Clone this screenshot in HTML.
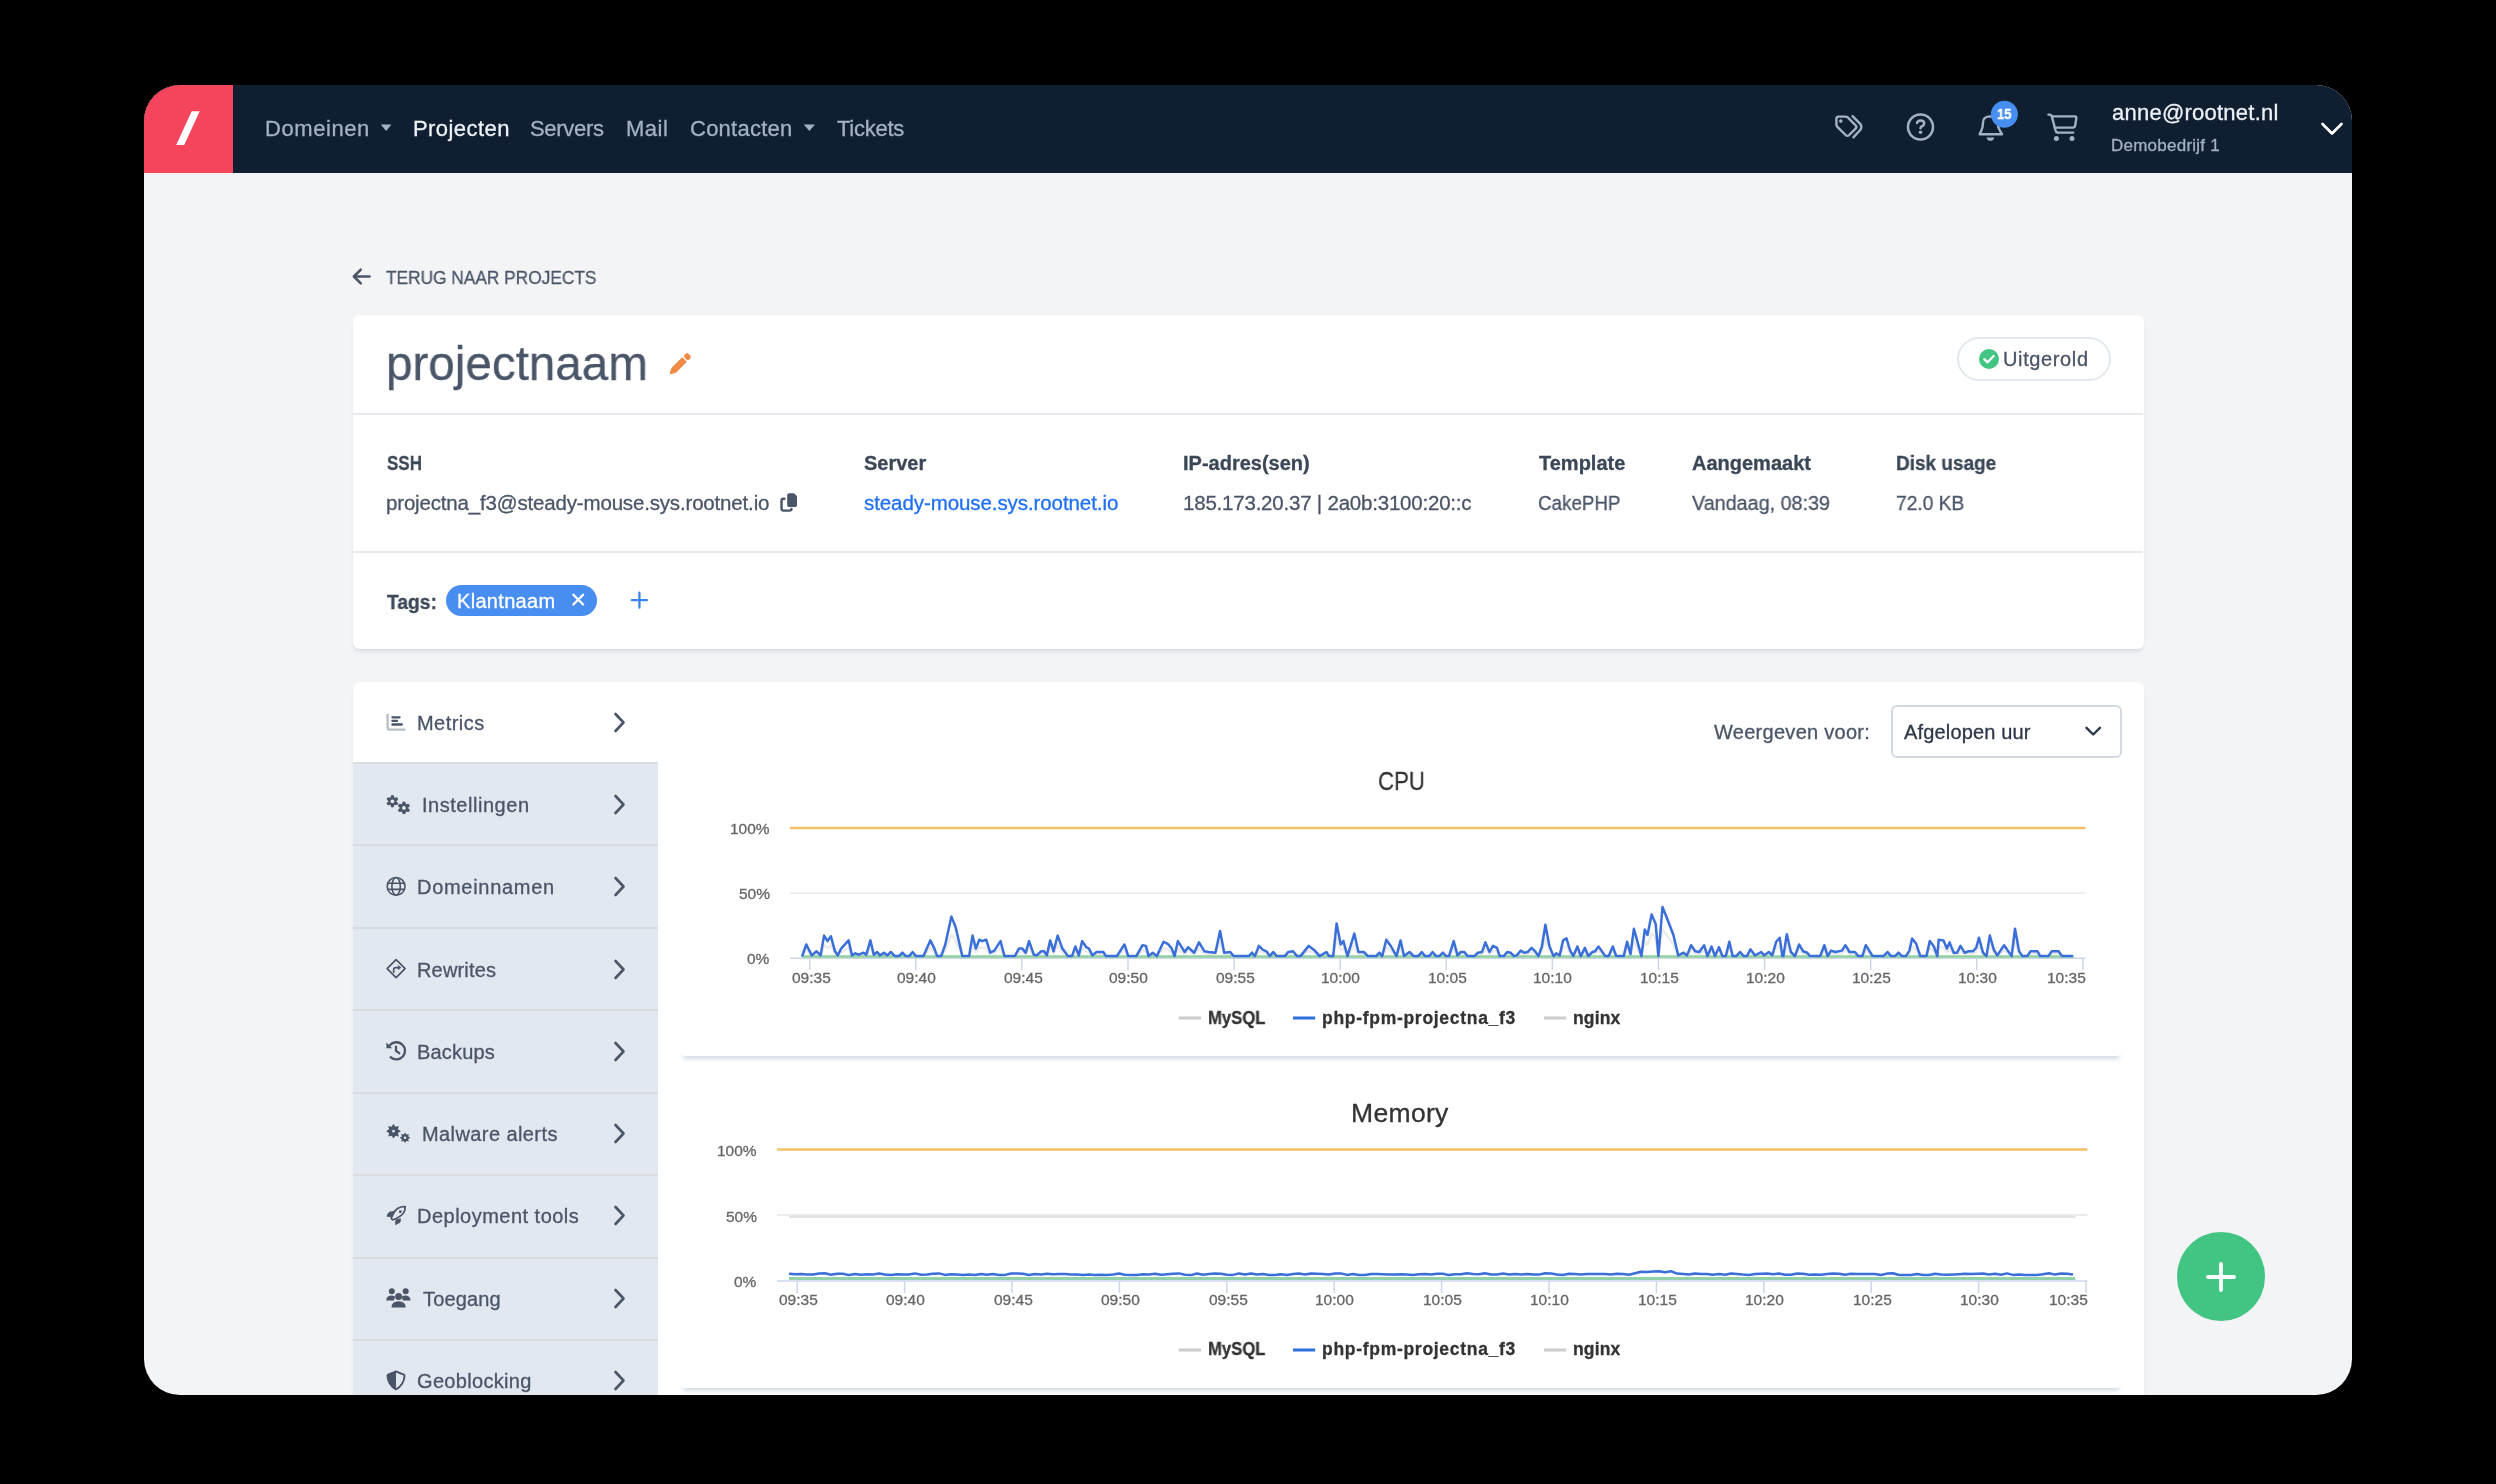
<!DOCTYPE html>
<html><head><meta charset="utf-8"><style>
html,body{margin:0;padding:0;}
body{width:2496px;height:1484px;background:#000;position:relative;overflow:hidden;font-family:"Liberation Sans",sans-serif;}
.t{position:absolute;white-space:pre;will-change:transform;-webkit-text-stroke:0.3px currentColor;}
#win{position:absolute;left:0;top:0;width:2496px;height:1484px;background:#f3f4f6;clip-path:inset(85px 144px 89px 144px round 36px);}
</style></head><body><div id="win">
<div style="position:absolute;left:144px;top:85px;width:2208px;height:87.5px;background:#0f1e30"></div>
<div style="position:absolute;left:144px;top:85px;width:88.5px;height:87.5px;background:#f5455c"></div>
<svg style="position:absolute;left:170px;top:105px" width="36" height="46" viewBox="0 0 36 46"><polygon points="21.7,6.3 29.7,6.3 14.2,40 6.2,40" fill="#fff"/></svg>
<div class="t" style="left:265.20px;top:118.07px;font-size:22px;line-height:22px;color:#a3b1c4;font-weight:400;letter-spacing:0.580px;">Domeinen</div>
<svg style="position:absolute;left:380px;top:124px" width="12" height="7" viewBox="0 0 12 7"><polygon points="0.8,0.5 11.5,0.5 6.15,6.9" fill="#a3b1c4"/></svg>
<div class="t" style="left:413.00px;top:118.07px;font-size:22px;line-height:22px;color:#eef2f7;font-weight:400;letter-spacing:0.437px;">Projecten</div>
<div class="t" style="left:530.10px;top:118.07px;font-size:22px;line-height:22px;color:#a3b1c4;font-weight:400;letter-spacing:-0.316px;">Servers</div>
<div class="t" style="left:626.40px;top:118.07px;font-size:22px;line-height:22px;color:#a3b1c4;font-weight:400;letter-spacing:0.517px;">Mail</div>
<div class="t" style="left:690.00px;top:118.07px;font-size:22px;line-height:22px;color:#a3b1c4;font-weight:400;letter-spacing:0.243px;">Contacten</div>
<svg style="position:absolute;left:803px;top:124px" width="13" height="7" viewBox="0 0 13 7"><polygon points="0.7,0.5 12,0.5 6.35,6.9" fill="#a3b1c4"/></svg>
<div class="t" style="left:837.40px;top:118.07px;font-size:22px;line-height:22px;color:#a3b1c4;font-weight:400;letter-spacing:-0.260px;">Tickets</div>
<svg style="position:absolute;left:0;top:0" width="2496" height="1484" viewBox="0 0 2496 1484"><g fill="none" stroke="#a3b1c4" stroke-width="2.4" stroke-linejoin="round" stroke-linecap="round"><path d="M1838.3,116.6 L1845.6,116.6 Q1847,116.6 1848,117.6 L1855.6,125.3 Q1857.2,127 1855.6,128.6 L1849.2,135 Q1847.4,136.8 1845.6,135 L1837.6,127.1 Q1836.4,125.9 1836.4,124.5 L1836.4,118.5 Q1836.4,116.6 1838.3,116.6 Z"/><path d="M1852.6,116.1 L1860.2,123.8 Q1862.4,126.6 1860.4,129.8 L1853.4,137.4"/></g><circle cx="1840.8" cy="121.1" r="1.8" fill="#a3b1c4"/><circle cx="1920.5" cy="127" r="12.5" fill="none" stroke="#a3b1c4" stroke-width="2.5"/><path d="M1917,123 Q1917.6,120.4 1920.6,120.4 Q1924.2,120.4 1924.2,123.4 Q1924.2,125.2 1921.8,126.3 Q1920.5,127 1920.5,128.2" fill="none" stroke="#a3b1c4" stroke-width="2.5" stroke-linecap="round"/><circle cx="1920.5" cy="132.3" r="1.75" fill="#a3b1c4"/><path d="M1979.6,134.2 L2002,134.2 L1999.6,130 Q1997.6,127 1997.6,122 Q1997.6,116.6 1990.4,116.4 Q1983,116.6 1983,122.4 Q1983,127 1981.4,130.6 Z" fill="none" stroke="#a3b1c4" stroke-width="2.4" stroke-linejoin="round"/><path d="M1986.6,137.4 L1994.2,137.4 Q1993.6,140.8 1990.4,140.8 Q1987.2,140.8 1986.6,137.4 Z" fill="#a3b1c4"/><circle cx="2004.4" cy="114.3" r="13.5" fill="#468ef0"/><g fill="none" stroke="#a3b1c4" stroke-width="2.4" stroke-linejoin="round" stroke-linecap="round"><path d="M2048.4,114.6 L2049.6,114.6 Q2051.4,114.6 2051.8,116.4 L2055.6,130.6 Q2056.2,132.6 2058.2,132.6 L2073.2,132.6"/><path d="M2052.2,116.4 L2075,116.4 Q2076.6,116.6 2076.3,118.2 L2075.2,125.6 Q2074.8,127.6 2072.8,127.6 L2054.8,127.6"/></g><circle cx="2056.4" cy="138.4" r="2.5" fill="#a3b1c4"/><circle cx="2072" cy="138.4" r="2.5" fill="#a3b1c4"/></svg>
<div class="t" style="left:1996.90px;top:107.32px;font-size:14.5px;line-height:14.5px;color:#ffffff;font-weight:700;letter-spacing:0.000px;transform:scaleX(0.8964);transform-origin:0 0;">15</div>
<div class="t" style="left:2111.50px;top:102.17px;font-size:22px;line-height:22px;color:#edf1f6;font-weight:400;letter-spacing:0.242px;">anne@rootnet.nl</div>
<div class="t" style="left:2111.00px;top:136.90px;font-size:17px;line-height:17px;color:#a3b1c4;font-weight:400;letter-spacing:0.244px;">Demobedrijf 1</div>
<svg style="position:absolute;left:2318px;top:118px" width="28" height="22" viewBox="0 0 28 22"><path d="M4.5,6 L14,15.5 L23.5,6" fill="none" stroke="#fff" stroke-width="2.8" stroke-linecap="round" stroke-linejoin="round"/></svg>
<svg style="position:absolute;left:350px;top:264px" width="26" height="26" viewBox="0 0 26 26"><g fill="none" stroke="#4a5568" stroke-width="2.6" stroke-linecap="round" stroke-linejoin="round"><path d="M4.5,12.5 L19.5,12.5"/><path d="M10.8,5.6 L3.9,12.5 L10.8,19.4"/></g></svg>
<div class="t" style="left:386.40px;top:267.71px;font-size:19px;line-height:19px;color:#4a5568;font-weight:400;letter-spacing:0.000px;transform:scaleX(0.9101);transform-origin:0 0;">TERUG NAAR PROJECTS</div>
<div style="position:absolute;left:353px;top:314.5px;width:1791px;height:334px;background:#fff;border-radius:7px;box-shadow:0 4px 5px -2px rgba(70,100,140,0.20)"></div>
<div class="t" style="left:386.09px;top:339.10px;font-size:49px;line-height:49px;color:#4a5568;font-weight:400;letter-spacing:0.000px;transform:scaleX(0.9715);transform-origin:0 0;">projectnaam</div>
<svg style="position:absolute;left:656.5px;top:347px" width="40" height="35" viewBox="0 0 40 35"><g transform="rotate(45 22.5 17.5)"><rect x="19.2" y="3.6" width="6.6" height="5.4" rx="2" fill="#f08a44"/><path d="M19.2,10.4 L25.8,10.4 L25.8,24 Q25.8,27 22.5,31.2 Q19.2,27 19.2,24 Z" fill="#f08a44"/></g></svg>
<div style="position:absolute;left:1956.5px;top:337px;width:154px;height:44px;box-sizing:border-box;border:2px solid #e3e8ef;border-radius:23px;"></div>
<svg style="position:absolute;left:1978px;top:348px" width="22" height="22" viewBox="0 0 22 22"><circle cx="11" cy="11" r="10" fill="#42c482"/><path d="M6.3,11.2 L9.6,14.3 L15.6,8" fill="none" stroke="#fff" stroke-width="2.3" stroke-linecap="round" stroke-linejoin="round"/></svg>
<div class="t" style="left:2003.00px;top:348.86px;font-size:20px;line-height:20px;color:#4a5568;font-weight:400;letter-spacing:0.623px;">Uitgerold</div>
<div style="position:absolute;left:353px;top:413px;width:1790px;height:2px;background:#e7ebf0"></div>
<div style="position:absolute;left:353px;top:550.5px;width:1790px;height:2px;background:#e7ebf0"></div>
<div class="t" style="left:386.60px;top:453.36px;font-size:20px;line-height:20px;color:#3b4757;font-weight:700;letter-spacing:0.000px;transform:scaleX(0.8505);transform-origin:0 0;">SSH</div>
<div class="t" style="left:863.80px;top:453.36px;font-size:20px;line-height:20px;color:#3b4757;font-weight:700;letter-spacing:0.000px;">Server</div>
<div class="t" style="left:1183.40px;top:453.36px;font-size:20px;line-height:20px;color:#3b4757;font-weight:700;letter-spacing:0.000px;">IP-adres(sen)</div>
<div class="t" style="left:1538.50px;top:453.36px;font-size:20px;line-height:20px;color:#3b4757;font-weight:700;letter-spacing:0.000px;">Template</div>
<div class="t" style="left:1692.30px;top:453.36px;font-size:20px;line-height:20px;color:#3b4757;font-weight:700;letter-spacing:0.000px;">Aangemaakt</div>
<div class="t" style="left:1895.75px;top:453.36px;font-size:20px;line-height:20px;color:#3b4757;font-weight:700;letter-spacing:0.000px;transform:scaleX(0.9485);transform-origin:0 0;">Disk usage</div>
<div class="t" style="left:386.00px;top:492.84px;font-size:20.5px;line-height:20.5px;color:#4a5568;font-weight:400;letter-spacing:-0.169px;">projectna_f3@steady-mouse.sys.rootnet.io</div>
<svg style="position:absolute;left:774px;top:488px" width="30" height="28" viewBox="0 0 30 28"><path d="M15,5.3 L19.4,5.3 Q20.2,5.3 20.8,5.9 L22.4,7.6 Q23,8.2 23,9 L23,17.2 Q23,18.9 21.3,18.9 L14.9,18.9 Q13.2,18.9 13.2,17.2 L13.2,7 Q13.2,5.3 15,5.3 Z" fill="#4a5568"/><path d="M10.4,10.8 L9.6,10.8 Q7.5,10.8 7.5,12.9 L7.5,20.5 Q7.5,22.6 9.6,22.6 L15.4,22.6 Q17.5,22.6 17.5,21" fill="none" stroke="#4a5568" stroke-width="2.4" stroke-linecap="round"/></svg>
<div class="t" style="left:863.80px;top:492.84px;font-size:20.5px;line-height:20.5px;color:#1f70f3;font-weight:400;letter-spacing:-0.080px;">steady-mouse.sys.rootnet.io</div>
<div class="t" style="left:1183.40px;top:492.84px;font-size:20.5px;line-height:20.5px;color:#4a5568;font-weight:400;letter-spacing:-0.210px;">185.173.20.37 | 2a0b:3100:20::c</div>
<div class="t" style="left:1537.58px;top:492.84px;font-size:20.5px;line-height:20.5px;color:#4a5568;font-weight:400;letter-spacing:0.000px;transform:scaleX(0.9170);transform-origin:0 0;">CakePHP</div>
<div class="t" style="left:1692.30px;top:492.84px;font-size:20.5px;line-height:20.5px;color:#4a5568;font-weight:400;letter-spacing:0.000px;transform:scaleX(0.9633);transform-origin:0 0;">Vandaag, 08:39</div>
<div class="t" style="left:1895.76px;top:492.84px;font-size:20.5px;line-height:20.5px;color:#4a5568;font-weight:400;letter-spacing:0.000px;transform:scaleX(0.9359);transform-origin:0 0;">72.0 KB</div>
<div class="t" style="left:386.50px;top:592.06px;font-size:20px;line-height:20px;color:#3b4757;font-weight:700;letter-spacing:0.000px;transform:scaleX(0.9622);transform-origin:0 0;">Tags:</div>
<div style="position:absolute;left:446px;top:585px;width:150.5px;height:30.5px;border-radius:16px;background:#488df0"></div>
<div class="t" style="left:456.80px;top:590.86px;font-size:20px;line-height:20px;color:#ffffff;font-weight:400;letter-spacing:0.318px;">Klantnaam</div>
<svg style="position:absolute;left:568px;top:589px" width="22" height="22" viewBox="0 0 22 22"><path d="M5.4,5.8 L15.1,15.5 M15.1,5.8 L5.4,15.5" stroke="#fff" stroke-width="2.3" stroke-linecap="round"/></svg>
<svg style="position:absolute;left:627px;top:587px" width="26" height="26" viewBox="0 0 26 26"><path d="M12.4,5.6 L12.4,20.7 M4.8,13.2 L19.9,13.2" stroke="#3c84f0" stroke-width="2.3" stroke-linecap="round"/></svg>
<div style="position:absolute;left:353px;top:682px;width:1791px;height:800px;background:#fff;border-radius:7px;box-shadow:0 4px 5px -2px rgba(70,100,140,0.20)"></div>
<div style="position:absolute;left:353px;top:762.5px;width:304.5px;height:720px;background:#e2e8f0"></div>
<div style="position:absolute;left:353px;top:762px;width:304.5px;height:1.5px;background:#d9dee5"></div>
<div style="position:absolute;left:353px;top:844.0px;width:304.5px;height:2px;background:#d9dbdd"></div>
<div style="position:absolute;left:353px;top:926.5px;width:304.5px;height:2px;background:#d9dbdd"></div>
<div style="position:absolute;left:353px;top:1009.0px;width:304.5px;height:2px;background:#d9dbdd"></div>
<div style="position:absolute;left:353px;top:1091.5px;width:304.5px;height:2px;background:#d9dbdd"></div>
<div style="position:absolute;left:353px;top:1174.0px;width:304.5px;height:2px;background:#d9dbdd"></div>
<div style="position:absolute;left:353px;top:1256.5px;width:304.5px;height:2px;background:#d9dbdd"></div>
<div style="position:absolute;left:353px;top:1339.0px;width:304.5px;height:2px;background:#d9dbdd"></div>
<div style="position:absolute;left:353px;top:1421.5px;width:304.5px;height:2px;background:#d9dbdd"></div>
<div class="t" style="left:417.00px;top:712.56px;font-size:20px;line-height:20px;color:#4a5568;font-weight:400;letter-spacing:0.459px;">Metrics</div>
<svg style="position:absolute;left:610px;top:709.5px" width="20" height="26" viewBox="0 0 20 26"><path d="M5.5,4 L13.5,12.5 L5.5,21" fill="none" stroke="#4a5568" stroke-width="2.6" stroke-linecap="round" stroke-linejoin="round"/></svg>
<div class="t" style="left:421.60px;top:794.66px;font-size:20px;line-height:20px;color:#4a5568;font-weight:400;letter-spacing:0.531px;">Instellingen</div>
<svg style="position:absolute;left:610px;top:791.6px" width="20" height="26" viewBox="0 0 20 26"><path d="M5.5,4 L13.5,12.5 L5.5,21" fill="none" stroke="#4a5568" stroke-width="2.6" stroke-linecap="round" stroke-linejoin="round"/></svg>
<div class="t" style="left:416.70px;top:876.96px;font-size:20px;line-height:20px;color:#4a5568;font-weight:400;letter-spacing:0.705px;">Domeinnamen</div>
<svg style="position:absolute;left:610px;top:873.9px" width="20" height="26" viewBox="0 0 20 26"><path d="M5.5,4 L13.5,12.5 L5.5,21" fill="none" stroke="#4a5568" stroke-width="2.6" stroke-linecap="round" stroke-linejoin="round"/></svg>
<div class="t" style="left:416.70px;top:959.56px;font-size:20px;line-height:20px;color:#4a5568;font-weight:400;letter-spacing:0.172px;">Rewrites</div>
<svg style="position:absolute;left:610px;top:956.5px" width="20" height="26" viewBox="0 0 20 26"><path d="M5.5,4 L13.5,12.5 L5.5,21" fill="none" stroke="#4a5568" stroke-width="2.6" stroke-linecap="round" stroke-linejoin="round"/></svg>
<div class="t" style="left:416.70px;top:1041.86px;font-size:20px;line-height:20px;color:#4a5568;font-weight:400;letter-spacing:0.182px;">Backups</div>
<svg style="position:absolute;left:610px;top:1038.8px" width="20" height="26" viewBox="0 0 20 26"><path d="M5.5,4 L13.5,12.5 L5.5,21" fill="none" stroke="#4a5568" stroke-width="2.6" stroke-linecap="round" stroke-linejoin="round"/></svg>
<div class="t" style="left:421.60px;top:1124.16px;font-size:20px;line-height:20px;color:#4a5568;font-weight:400;letter-spacing:0.412px;">Malware alerts</div>
<svg style="position:absolute;left:610px;top:1121.1px" width="20" height="26" viewBox="0 0 20 26"><path d="M5.5,4 L13.5,12.5 L5.5,21" fill="none" stroke="#4a5568" stroke-width="2.6" stroke-linecap="round" stroke-linejoin="round"/></svg>
<div class="t" style="left:416.70px;top:1206.46px;font-size:20px;line-height:20px;color:#4a5568;font-weight:400;letter-spacing:0.485px;">Deployment tools</div>
<svg style="position:absolute;left:610px;top:1203.4px" width="20" height="26" viewBox="0 0 20 26"><path d="M5.5,4 L13.5,12.5 L5.5,21" fill="none" stroke="#4a5568" stroke-width="2.6" stroke-linecap="round" stroke-linejoin="round"/></svg>
<div class="t" style="left:422.60px;top:1288.76px;font-size:20px;line-height:20px;color:#4a5568;font-weight:400;letter-spacing:0.131px;">Toegang</div>
<svg style="position:absolute;left:610px;top:1285.7px" width="20" height="26" viewBox="0 0 20 26"><path d="M5.5,4 L13.5,12.5 L5.5,21" fill="none" stroke="#4a5568" stroke-width="2.6" stroke-linecap="round" stroke-linejoin="round"/></svg>
<div class="t" style="left:416.70px;top:1371.06px;font-size:20px;line-height:20px;color:#4a5568;font-weight:400;letter-spacing:0.324px;">Geoblocking</div>
<svg style="position:absolute;left:610px;top:1368.0px" width="20" height="26" viewBox="0 0 20 26"><path d="M5.5,4 L13.5,12.5 L5.5,21" fill="none" stroke="#4a5568" stroke-width="2.6" stroke-linecap="round" stroke-linejoin="round"/></svg>
<div class="t" style="left:1714.00px;top:722.36px;font-size:20px;line-height:20px;color:#4a5568;font-weight:400;letter-spacing:0.280px;">Weergeven voor:</div>
<div style="position:absolute;left:1890.5px;top:704.5px;width:231.5px;height:53px;box-sizing:border-box;border:2px solid #d3d9e0;border-radius:6px;background:#fff"></div>
<div class="t" style="left:1903.50px;top:722.36px;font-size:20px;line-height:20px;color:#2d3748;font-weight:400;letter-spacing:0.160px;">Afgelopen uur</div>
<svg style="position:absolute;left:2080px;top:720px" width="26" height="24" viewBox="0 0 26 24"><path d="M6.5,7.8 L13.2,14.5 L19.9,7.8" fill="none" stroke="#2d3748" stroke-width="2.4" stroke-linecap="round" stroke-linejoin="round"/></svg>
<div style="position:absolute;left:680px;top:759px;width:1442px;height:297px;background:#fff;border-radius:5px;box-shadow:0 6px 4px -3px rgba(70,100,140,0.22)"></div>
<div class="t" style="left:1377.66px;top:768.15px;font-size:26.5px;line-height:26.5px;color:#333333;font-weight:400;letter-spacing:0.000px;transform:scaleX(0.8381);transform-origin:0 0;">CPU</div>
<div class="t" style="left:730.14px;top:821.17px;font-size:15.5px;line-height:15.5px;color:#666666;font-weight:400;letter-spacing:0.000px;">100%</div>
<div class="t" style="left:738.76px;top:886.47px;font-size:15.5px;line-height:15.5px;color:#666666;font-weight:400;letter-spacing:0.000px;">50%</div>
<div class="t" style="left:747.38px;top:951.07px;font-size:15.5px;line-height:15.5px;color:#666666;font-weight:400;letter-spacing:0.000px;">0%</div>
<svg style="position:absolute;left:0;top:0" width="2496" height="1484" viewBox="0 0 2496 1484"><line x1="790.1" y1="893.2" x2="2085.5" y2="893.2" stroke="#e6e6e6" stroke-width="1.3"/><line x1="790.1" y1="958.2" x2="2085.5" y2="958.2" stroke="#ccd6eb" stroke-width="1.5"/><line x1="809.7" y1="958.2" x2="809.7" y2="970.2" stroke="#ccd6eb" stroke-width="1.5"/><line x1="915.8" y1="958.2" x2="915.8" y2="970.2" stroke="#ccd6eb" stroke-width="1.5"/><line x1="1021.9" y1="958.2" x2="1021.9" y2="970.2" stroke="#ccd6eb" stroke-width="1.5"/><line x1="1128.0" y1="958.2" x2="1128.0" y2="970.2" stroke="#ccd6eb" stroke-width="1.5"/><line x1="1234.1" y1="958.2" x2="1234.1" y2="970.2" stroke="#ccd6eb" stroke-width="1.5"/><line x1="1340.2" y1="958.2" x2="1340.2" y2="970.2" stroke="#ccd6eb" stroke-width="1.5"/><line x1="1446.3" y1="958.2" x2="1446.3" y2="970.2" stroke="#ccd6eb" stroke-width="1.5"/><line x1="1552.4" y1="958.2" x2="1552.4" y2="970.2" stroke="#ccd6eb" stroke-width="1.5"/><line x1="1658.5" y1="958.2" x2="1658.5" y2="970.2" stroke="#ccd6eb" stroke-width="1.5"/><line x1="1764.6" y1="958.2" x2="1764.6" y2="970.2" stroke="#ccd6eb" stroke-width="1.5"/><line x1="1870.7" y1="958.2" x2="1870.7" y2="970.2" stroke="#ccd6eb" stroke-width="1.5"/><line x1="1976.8" y1="958.2" x2="1976.8" y2="970.2" stroke="#ccd6eb" stroke-width="1.5"/><line x1="2082.9" y1="958.2" x2="2082.9" y2="970.2" stroke="#ccd6eb" stroke-width="1.5"/><polyline points="802.0,956.6 806.3,949.9 811.8,955.9 816.6,953.6 820.6,955.9 824.1,945.0 827.5,948.0 830.9,945.4 835.0,953.6 837.7,955.9 841.1,952.1 848.6,947.6 852.0,955.9 855.4,954.8 858.8,955.5 863.6,954.4 866.3,955.5 870.4,947.6 873.8,955.5 877.2,954.0 879.9,955.9 884.0,954.4 887.4,955.9 890.8,954.0 894.9,956.3 899.0,956.3 902.4,954.4 905.8,956.3 909.2,956.3 912.6,954.0 916.0,956.3 923.5,956.3 930.3,947.6 934.4,952.1 937.1,956.3 941.2,956.3 945.3,949.9 951.4,934.5 955.5,940.2 960.3,951.4 962.3,956.3 969.1,956.3 972.5,945.0 975.9,952.1 979.3,947.3 982.1,948.0 986.2,947.3 990.2,954.4 994.3,953.3 1000.5,948.0 1004.5,956.3 1014.8,956.3 1018.9,952.1 1022.3,952.1 1025.7,954.4 1029.1,948.0 1033.8,955.5 1036.6,955.9 1041.3,953.6 1044.1,953.6 1046.8,955.9 1050.2,947.6 1053.6,953.6 1057.7,945.0 1062.4,952.1 1067.9,956.3 1072.0,956.3 1075.4,951.0 1078.8,955.9 1082.2,948.0 1086.3,951.4 1089.0,952.1 1092.4,955.9 1096.5,954.0 1103.3,954.0 1106.0,956.3 1116.9,956.3 1124.4,949.9 1124.8,950.3 1128.2,956.3 1136.3,956.3 1142.5,950.3 1145.9,950.6 1148.6,956.3 1152.7,954.4 1156.8,956.3 1163.6,948.4 1167.7,949.5 1171.8,952.1 1174.5,956.3 1177.9,948.0 1184.7,954.0 1188.1,951.4 1194.2,954.4 1199.0,948.8 1204.5,953.6 1208.5,954.0 1215.4,954.4 1220.1,942.4 1224.2,954.4 1230.3,954.0 1233.7,956.3 1248.7,956.3 1252.1,954.4 1254.9,956.3 1258.9,950.6 1263.0,952.9 1266.4,953.6 1269.8,956.3 1273.2,954.0 1276.7,956.3 1284.8,956.3 1288.2,954.0 1293.0,953.6 1297.1,956.3 1300.5,956.3 1308.7,950.6 1314.8,953.3 1319.6,956.3 1326.4,954.0 1329.1,956.3 1333.2,956.3 1336.6,938.3 1340.7,949.9 1343.4,948.0 1347.5,956.3 1354.3,943.9 1358.4,954.0 1363.8,954.0 1367.9,956.3 1376.1,956.3 1379.5,954.4 1382.2,956.3 1386.3,947.3 1391.1,951.0 1396.5,956.3 1400.6,947.6 1404.0,956.3 1409.5,954.0 1413.6,956.3 1418.3,956.3 1421.7,954.0 1425.1,956.3 1429.2,956.3 1432.6,954.0 1436.0,956.3 1439.4,956.3 1442.8,954.4 1446.2,956.3 1449.0,956.3 1453.7,948.0 1457.5,955.9 1460.9,954.0 1464.3,954.0 1467.7,956.3 1474.5,956.3 1477.9,954.4 1482.0,954.0 1485.4,948.8 1489.5,954.0 1492.9,950.6 1497.0,951.8 1499.7,956.3 1503.8,956.3 1507.2,954.0 1510.6,954.4 1514.0,956.3 1516.7,955.9 1520.8,953.3 1524.2,954.4 1527.6,954.0 1531.7,951.8 1535.1,953.6 1538.5,956.3 1541.9,951.0 1545.4,939.0 1549.4,950.6 1553.5,956.3 1556.3,954.8 1559.7,955.9 1563.1,947.6 1566.5,946.5 1569.9,952.9 1573.3,956.3 1577.4,951.0 1580.8,956.3 1584.9,951.8 1588.3,956.3 1592.4,954.0 1595.1,953.6 1598.5,951.0 1605.3,956.3 1608.7,956.3 1612.8,951.0 1616.2,956.3 1623.7,956.3 1627.1,948.4 1630.5,955.1 1633.9,941.3 1641.4,956.3 1644.8,941.7 1647.5,944.6 1651.6,933.4 1655.7,938.7 1658.4,956.3 1662.5,929.3 1666.6,934.9 1673.4,944.6 1678.2,955.9 1683.6,954.4 1687.0,955.9 1691.1,950.3 1695.2,953.6 1699.3,954.0 1704.1,950.3 1707.5,956.3 1711.5,951.0 1715.0,956.3 1719.0,951.4 1722.4,956.3 1725.8,956.3 1729.3,948.4 1732.7,956.3 1736.1,956.3 1740.2,954.0 1743.6,956.3 1747.0,956.3 1750.4,952.5 1755.1,955.9 1761.3,954.0 1764.0,955.9 1768.8,954.0 1772.2,955.9 1776.2,948.4 1779.7,946.1 1782.4,956.3 1783.4,956.3 1786.8,944.3 1790.9,954.0 1795.0,956.3 1799.1,949.9 1803.2,953.6 1807.2,954.4 1810.0,956.3 1820.2,956.3 1824.3,950.3 1827.7,956.3 1831.1,953.3 1835.2,954.0 1842.0,953.3 1845.4,950.3 1849.5,954.0 1854.9,954.0 1858.3,956.3 1862.4,956.3 1865.8,950.3 1872.6,956.3 1879.4,956.3 1883.5,956.3 1887.6,954.0 1891.0,956.3 1895.1,956.3 1898.5,954.4 1901.9,956.3 1906.0,956.3 1909.4,953.3 1912.1,946.5 1916.2,949.5 1920.3,956.3 1926.4,956.3 1929.8,948.0 1933.9,951.0 1937.3,956.3 1938.7,947.3 1943.5,947.6 1946.9,952.1 1949.6,948.8 1953.7,954.4 1957.1,954.4 1960.5,950.6 1964.6,954.4 1968.7,953.6 1972.8,953.6 1976.2,951.8 1978.9,946.1 1983.0,954.4 1986.4,956.3 1989.8,945.0 1993.9,952.9 1997.3,955.9 2004.1,950.3 2011.6,956.3 2015.0,941.3 2019.1,953.6 2022.5,956.3 2027.2,956.3 2030.6,953.6 2037.5,953.6 2040.2,956.3 2048.4,956.3 2051.8,953.6 2058.6,953.6 2062.0,956.3 2072.9,956.3" fill="none" stroke="#ebebeb" stroke-width="2.5" stroke-linejoin="round"/><line x1="802" y1="956.5" x2="2074" y2="956.5" stroke="#90d0a0" stroke-width="2.5"/><polyline points="802.0,956.7 806.3,944.5 811.8,955.4 816.6,951.3 820.6,955.4 824.1,935.6 827.5,941.1 830.9,936.3 835.0,951.3 837.7,955.4 841.1,948.6 848.6,940.4 852.0,955.4 855.4,953.3 858.8,954.7 863.6,952.7 866.3,954.7 870.4,940.4 873.8,954.7 877.2,952.0 879.9,955.4 884.0,952.7 887.4,955.4 890.8,952.0 894.9,956.1 899.0,956.1 902.4,952.7 905.8,956.1 909.2,956.1 912.6,952.0 916.0,956.1 923.5,956.1 930.3,940.4 934.4,948.6 937.1,956.1 941.2,956.1 945.3,944.5 951.4,916.6 955.5,926.8 960.3,947.2 962.3,956.1 969.1,956.1 972.5,935.6 975.9,948.6 979.3,939.7 982.1,941.1 986.2,939.7 990.2,952.7 994.3,950.6 1000.5,941.1 1004.5,956.1 1014.8,956.1 1018.9,948.6 1022.3,948.6 1025.7,952.7 1029.1,941.1 1033.8,954.7 1036.6,955.4 1041.3,951.3 1044.1,951.3 1046.8,955.4 1050.2,940.4 1053.6,951.3 1057.7,935.6 1062.4,948.6 1067.9,956.1 1072.0,956.1 1075.4,946.5 1078.8,955.4 1082.2,941.1 1086.3,947.2 1089.0,948.6 1092.4,955.4 1096.5,952.0 1103.3,952.0 1106.0,956.1 1116.9,956.1 1124.4,944.5 1124.8,945.2 1128.2,956.1 1136.3,956.1 1142.5,945.2 1145.9,945.9 1148.6,956.1 1152.7,952.7 1156.8,956.1 1163.6,941.8 1167.7,943.8 1171.8,948.6 1174.5,956.1 1177.9,941.1 1184.7,952.0 1188.1,947.2 1194.2,952.7 1199.0,942.4 1204.5,951.3 1208.5,952.0 1215.4,952.7 1220.1,930.9 1224.2,952.7 1230.3,952.0 1233.7,956.1 1248.7,956.1 1252.1,952.7 1254.9,956.1 1258.9,945.9 1263.0,949.9 1266.4,951.3 1269.8,956.1 1273.2,952.0 1276.7,956.1 1284.8,956.1 1288.2,952.0 1293.0,951.3 1297.1,956.1 1300.5,956.1 1308.7,945.9 1314.8,950.6 1319.6,956.1 1326.4,952.0 1329.1,956.1 1333.2,956.1 1336.6,923.4 1340.7,944.5 1343.4,941.1 1347.5,956.1 1354.3,933.6 1358.4,952.0 1363.8,952.0 1367.9,956.1 1376.1,956.1 1379.5,952.7 1382.2,956.1 1386.3,939.7 1391.1,946.5 1396.5,956.1 1400.6,940.4 1404.0,956.1 1409.5,952.0 1413.6,956.1 1418.3,956.1 1421.7,952.0 1425.1,956.1 1429.2,956.1 1432.6,952.0 1436.0,956.1 1439.4,956.1 1442.8,952.7 1446.2,956.1 1449.0,956.1 1453.7,941.1 1457.5,955.4 1460.9,952.0 1464.3,952.0 1467.7,956.1 1474.5,956.1 1477.9,952.7 1482.0,952.0 1485.4,942.4 1489.5,952.0 1492.9,945.9 1497.0,947.9 1499.7,956.1 1503.8,956.1 1507.2,952.0 1510.6,952.7 1514.0,956.1 1516.7,955.4 1520.8,950.6 1524.2,952.7 1527.6,952.0 1531.7,947.9 1535.1,951.3 1538.5,956.1 1541.9,946.5 1545.4,924.7 1549.4,945.9 1553.5,956.1 1556.3,953.3 1559.7,955.4 1563.1,940.4 1566.5,938.4 1569.9,949.9 1573.3,956.1 1577.4,946.5 1580.8,956.1 1584.9,947.9 1588.3,956.1 1592.4,952.0 1595.1,951.3 1598.5,946.5 1605.3,956.1 1608.7,956.1 1612.8,946.5 1616.2,956.1 1623.7,956.1 1627.1,941.8 1630.5,954.0 1633.9,928.8 1641.4,956.1 1644.8,929.5 1647.5,935.0 1651.6,914.5 1655.7,924.1 1658.4,956.1 1662.5,907.0 1666.6,917.2 1673.4,935.0 1678.2,955.4 1683.6,952.7 1687.0,955.4 1691.1,945.2 1695.2,951.3 1699.3,952.0 1704.1,945.2 1707.5,956.1 1711.5,946.5 1715.0,956.1 1719.0,947.2 1722.4,956.1 1725.8,956.1 1729.3,941.8 1732.7,956.1 1736.1,956.1 1740.2,952.0 1743.6,956.1 1747.0,956.1 1750.4,949.3 1755.1,955.4 1761.3,952.0 1764.0,955.4 1768.8,952.0 1772.2,955.4 1776.2,941.8 1779.7,937.7 1782.4,956.1 1783.4,956.1 1786.8,934.3 1790.9,952.0 1795.0,956.1 1799.1,944.5 1803.2,951.3 1807.2,952.7 1810.0,956.1 1820.2,956.1 1824.3,945.2 1827.7,956.1 1831.1,950.6 1835.2,952.0 1842.0,950.6 1845.4,945.2 1849.5,952.0 1854.9,952.0 1858.3,956.1 1862.4,956.1 1865.8,945.2 1872.6,956.1 1879.4,956.1 1883.5,956.1 1887.6,952.0 1891.0,956.1 1895.1,956.1 1898.5,952.7 1901.9,956.1 1906.0,956.1 1909.4,950.6 1912.1,938.4 1916.2,943.8 1920.3,956.1 1926.4,956.1 1929.8,941.1 1933.9,946.5 1937.3,956.1 1938.7,939.7 1943.5,940.4 1946.9,948.6 1949.6,942.4 1953.7,952.7 1957.1,952.7 1960.5,945.9 1964.6,952.7 1968.7,951.3 1972.8,951.3 1976.2,947.9 1978.9,937.7 1983.0,952.7 1986.4,956.1 1989.8,935.6 1993.9,949.9 1997.3,955.4 2004.1,945.2 2011.6,956.1 2015.0,928.8 2019.1,951.3 2022.5,956.1 2027.2,956.1 2030.6,951.3 2037.5,951.3 2040.2,956.1 2048.4,956.1 2051.8,951.3 2058.6,951.3 2062.0,956.1 2072.9,956.1" fill="none" stroke="#3a6fd9" stroke-width="2.5" stroke-linejoin="round"/><line x1="790.1" y1="828" x2="2085.5" y2="828" stroke="#f2be66" stroke-width="2.3"/></svg>
<div class="t" style="left:791.62px;top:970.27px;font-size:15.5px;line-height:15.5px;color:#666666;font-weight:400;letter-spacing:0.000px;">09:35</div>
<div class="t" style="left:897.22px;top:970.27px;font-size:15.5px;line-height:15.5px;color:#666666;font-weight:400;letter-spacing:0.000px;">09:40</div>
<div class="t" style="left:1003.82px;top:970.27px;font-size:15.5px;line-height:15.5px;color:#666666;font-weight:400;letter-spacing:0.000px;">09:45</div>
<div class="t" style="left:1109.42px;top:970.27px;font-size:15.5px;line-height:15.5px;color:#666666;font-weight:400;letter-spacing:0.000px;">09:50</div>
<div class="t" style="left:1216.02px;top:970.27px;font-size:15.5px;line-height:15.5px;color:#666666;font-weight:400;letter-spacing:0.000px;">09:55</div>
<div class="t" style="left:1321.12px;top:970.27px;font-size:15.5px;line-height:15.5px;color:#666666;font-weight:400;letter-spacing:0.000px;">10:00</div>
<div class="t" style="left:1427.72px;top:970.27px;font-size:15.5px;line-height:15.5px;color:#666666;font-weight:400;letter-spacing:0.000px;">10:05</div>
<div class="t" style="left:1533.32px;top:970.27px;font-size:15.5px;line-height:15.5px;color:#666666;font-weight:400;letter-spacing:0.000px;">10:10</div>
<div class="t" style="left:1639.92px;top:970.27px;font-size:15.5px;line-height:15.5px;color:#666666;font-weight:400;letter-spacing:0.000px;">10:15</div>
<div class="t" style="left:1745.52px;top:970.27px;font-size:15.5px;line-height:15.5px;color:#666666;font-weight:400;letter-spacing:0.000px;">10:20</div>
<div class="t" style="left:1852.12px;top:970.27px;font-size:15.5px;line-height:15.5px;color:#666666;font-weight:400;letter-spacing:0.000px;">10:25</div>
<div class="t" style="left:1957.72px;top:970.27px;font-size:15.5px;line-height:15.5px;color:#666666;font-weight:400;letter-spacing:0.000px;">10:30</div>
<div class="t" style="left:2047.33px;top:970.27px;font-size:15.5px;line-height:15.5px;color:#666666;font-weight:400;letter-spacing:0.000px;">10:35</div>
<svg style="position:absolute;left:1170px;top:1008.4px" width="420" height="20" viewBox="1170 1008.4 420 20"><line x1="1178.8" y1="1018.4" x2="1201" y2="1018.4" stroke="#cccccc" stroke-width="3"/><line x1="1293" y1="1018.4" x2="1315.2" y2="1018.4" stroke="#2f6fe0" stroke-width="3"/><line x1="1544" y1="1018.4" x2="1566.2" y2="1018.4" stroke="#cccccc" stroke-width="3"/></svg>
<div class="t" style="left:1207.75px;top:1009.58px;font-size:17.5px;line-height:17.5px;color:#333333;font-weight:700;letter-spacing:0.000px;transform:scaleX(0.9531);transform-origin:0 0;">MySQL</div>
<div class="t" style="left:1322.00px;top:1009.58px;font-size:17.5px;line-height:17.5px;color:#333333;font-weight:700;letter-spacing:0.709px;">php-fpm-projectna_f3</div>
<div class="t" style="left:1572.60px;top:1009.58px;font-size:17.5px;line-height:17.5px;color:#333333;font-weight:700;letter-spacing:0.167px;">nginx</div>
<div style="position:absolute;left:680px;top:1088px;width:1442px;height:300px;background:#fff;border-radius:5px;box-shadow:0 6px 4px -3px rgba(70,100,140,0.22)"></div>
<div class="t" style="left:1351.30px;top:1100.45px;font-size:26.5px;line-height:26.5px;color:#333333;font-weight:400;letter-spacing:0.330px;">Memory</div>
<div class="t" style="left:717.14px;top:1142.87px;font-size:15.5px;line-height:15.5px;color:#666666;font-weight:400;letter-spacing:0.000px;">100%</div>
<div class="t" style="left:725.76px;top:1208.87px;font-size:15.5px;line-height:15.5px;color:#666666;font-weight:400;letter-spacing:0.000px;">50%</div>
<div class="t" style="left:734.38px;top:1274.17px;font-size:15.5px;line-height:15.5px;color:#666666;font-weight:400;letter-spacing:0.000px;">0%</div>
<svg style="position:absolute;left:0;top:0" width="2496" height="1484" viewBox="0 0 2496 1484"><line x1="777.1" y1="1215" x2="2087.3" y2="1215" stroke="#e6e6e6" stroke-width="1.3"/><line x1="777.1" y1="1281" x2="2087.3" y2="1281" stroke="#ccd6eb" stroke-width="1.5"/><line x1="797.2" y1="1281" x2="797.2" y2="1293" stroke="#ccd6eb" stroke-width="1.5"/><line x1="904.6" y1="1281" x2="904.6" y2="1293" stroke="#ccd6eb" stroke-width="1.5"/><line x1="1012.0" y1="1281" x2="1012.0" y2="1293" stroke="#ccd6eb" stroke-width="1.5"/><line x1="1119.4" y1="1281" x2="1119.4" y2="1293" stroke="#ccd6eb" stroke-width="1.5"/><line x1="1226.8" y1="1281" x2="1226.8" y2="1293" stroke="#ccd6eb" stroke-width="1.5"/><line x1="1334.2" y1="1281" x2="1334.2" y2="1293" stroke="#ccd6eb" stroke-width="1.5"/><line x1="1441.6" y1="1281" x2="1441.6" y2="1293" stroke="#ccd6eb" stroke-width="1.5"/><line x1="1549.0" y1="1281" x2="1549.0" y2="1293" stroke="#ccd6eb" stroke-width="1.5"/><line x1="1656.4" y1="1281" x2="1656.4" y2="1293" stroke="#ccd6eb" stroke-width="1.5"/><line x1="1763.8" y1="1281" x2="1763.8" y2="1293" stroke="#ccd6eb" stroke-width="1.5"/><line x1="1871.2" y1="1281" x2="1871.2" y2="1293" stroke="#ccd6eb" stroke-width="1.5"/><line x1="1978.6" y1="1281" x2="1978.6" y2="1293" stroke="#ccd6eb" stroke-width="1.5"/><line x1="2086.0" y1="1281" x2="2086.0" y2="1293" stroke="#ccd6eb" stroke-width="1.5"/><line x1="789" y1="1216.7" x2="2075.4" y2="1216.7" stroke="#e2e2e2" stroke-width="2.6"/><line x1="789" y1="1278.6" x2="2075.4" y2="1278.6" stroke="#92d1a9" stroke-width="3"/><polyline points="789.0,1273.7 795.0,1274.3 801.0,1274.0 807.0,1274.4 813.0,1274.4 819.0,1273.4 825.0,1273.3 831.0,1274.8 837.0,1273.8 843.0,1273.7 849.0,1275.1 855.0,1274.1 861.0,1274.8 867.0,1274.2 873.0,1274.5 879.0,1273.6 885.0,1274.4 891.0,1274.9 897.0,1274.2 903.0,1274.6 909.0,1274.5 915.0,1273.4 921.0,1274.7 927.0,1274.4 933.0,1273.8 939.0,1273.4 945.0,1274.9 951.0,1274.2 957.0,1274.6 963.0,1274.9 969.0,1274.6 975.0,1275.0 981.0,1274.0 987.0,1274.7 993.0,1274.1 999.0,1275.0 1005.0,1274.9 1011.0,1273.5 1017.0,1273.5 1023.0,1273.7 1029.0,1275.0 1035.0,1274.1 1041.0,1274.4 1047.0,1273.8 1053.0,1274.2 1059.0,1274.0 1065.0,1273.9 1071.0,1274.4 1077.0,1274.4 1083.0,1274.9 1089.0,1274.5 1095.0,1275.0 1101.0,1274.8 1107.0,1275.1 1113.0,1274.5 1119.0,1273.6 1125.0,1274.8 1131.0,1275.0 1137.0,1274.9 1143.0,1274.3 1149.0,1274.6 1155.0,1273.7 1161.0,1274.8 1167.0,1274.3 1173.0,1273.8 1179.0,1273.4 1185.0,1274.8 1191.0,1275.1 1197.0,1273.5 1203.0,1274.7 1209.0,1274.0 1215.0,1273.6 1221.0,1273.8 1227.0,1274.7 1233.0,1274.9 1239.0,1273.4 1245.0,1274.4 1251.0,1273.4 1257.0,1274.6 1263.0,1273.9 1269.0,1274.9 1275.0,1275.1 1281.0,1274.2 1287.0,1275.1 1293.0,1273.9 1299.0,1273.4 1305.0,1274.4 1311.0,1273.4 1317.0,1273.7 1323.0,1274.0 1329.0,1274.4 1335.0,1273.6 1341.0,1273.4 1347.0,1274.9 1353.0,1273.9 1359.0,1275.0 1365.0,1274.9 1371.0,1274.0 1377.0,1274.1 1383.0,1274.2 1389.0,1274.5 1395.0,1274.4 1401.0,1274.3 1407.0,1274.4 1413.0,1275.0 1419.0,1274.2 1425.0,1274.1 1431.0,1274.6 1437.0,1273.7 1443.0,1273.8 1449.0,1275.1 1455.0,1274.2 1461.0,1274.3 1467.0,1273.3 1473.0,1274.0 1479.0,1274.3 1485.0,1273.3 1491.0,1274.4 1497.0,1274.4 1503.0,1273.4 1509.0,1274.4 1515.0,1274.1 1521.0,1274.5 1527.0,1273.9 1533.0,1274.6 1539.0,1274.6 1545.0,1273.3 1551.0,1273.4 1557.0,1274.5 1563.0,1275.0 1569.0,1273.8 1575.0,1274.1 1581.0,1274.4 1587.0,1273.9 1593.0,1274.0 1599.0,1273.9 1605.0,1274.0 1611.0,1274.4 1617.0,1273.8 1623.0,1274.0 1629.0,1274.7 1635.0,1273.3 1641.0,1271.8 1647.0,1272.1 1653.0,1271.4 1659.0,1271.2 1665.0,1272.2 1671.0,1271.2 1677.0,1273.6 1683.0,1274.1 1689.0,1274.6 1695.0,1273.5 1701.0,1273.9 1707.0,1273.9 1713.0,1274.8 1719.0,1274.1 1725.0,1274.8 1731.0,1273.6 1737.0,1273.9 1743.0,1274.5 1749.0,1274.9 1755.0,1274.1 1761.0,1273.7 1767.0,1273.5 1773.0,1274.3 1779.0,1273.6 1785.0,1274.8 1791.0,1274.8 1797.0,1273.6 1803.0,1273.8 1809.0,1274.8 1815.0,1274.5 1821.0,1274.8 1827.0,1273.9 1833.0,1273.5 1839.0,1273.8 1845.0,1274.7 1851.0,1273.8 1857.0,1273.9 1863.0,1274.1 1869.0,1274.1 1875.0,1274.0 1881.0,1275.0 1887.0,1273.6 1893.0,1273.3 1899.0,1275.0 1905.0,1274.9 1911.0,1275.1 1917.0,1274.1 1923.0,1275.0 1929.0,1275.0 1935.0,1273.7 1941.0,1274.6 1947.0,1274.8 1953.0,1274.5 1959.0,1274.2 1965.0,1273.8 1971.0,1273.9 1977.0,1273.7 1983.0,1273.4 1989.0,1274.4 1995.0,1273.8 2001.0,1274.8 2007.0,1273.4 2013.0,1274.9 2019.0,1274.5 2025.0,1275.0 2031.0,1274.9 2037.0,1274.9 2043.0,1274.3 2049.0,1273.3 2055.0,1274.6 2061.0,1273.6 2067.0,1273.8 2073.0,1274.5" fill="none" stroke="#3a6fd9" stroke-width="2.5" stroke-linejoin="round"/><line x1="777.1" y1="1149.5" x2="2087.3" y2="1149.5" stroke="#f2be66" stroke-width="2.3"/></svg>
<div class="t" style="left:779.12px;top:1292.47px;font-size:15.5px;line-height:15.5px;color:#666666;font-weight:400;letter-spacing:0.000px;">09:35</div>
<div class="t" style="left:886.02px;top:1292.47px;font-size:15.5px;line-height:15.5px;color:#666666;font-weight:400;letter-spacing:0.000px;">09:40</div>
<div class="t" style="left:993.92px;top:1292.47px;font-size:15.5px;line-height:15.5px;color:#666666;font-weight:400;letter-spacing:0.000px;">09:45</div>
<div class="t" style="left:1100.82px;top:1292.47px;font-size:15.5px;line-height:15.5px;color:#666666;font-weight:400;letter-spacing:0.000px;">09:50</div>
<div class="t" style="left:1208.72px;top:1292.47px;font-size:15.5px;line-height:15.5px;color:#666666;font-weight:400;letter-spacing:0.000px;">09:55</div>
<div class="t" style="left:1315.12px;top:1292.47px;font-size:15.5px;line-height:15.5px;color:#666666;font-weight:400;letter-spacing:0.000px;">10:00</div>
<div class="t" style="left:1423.02px;top:1292.47px;font-size:15.5px;line-height:15.5px;color:#666666;font-weight:400;letter-spacing:0.000px;">10:05</div>
<div class="t" style="left:1529.92px;top:1292.47px;font-size:15.5px;line-height:15.5px;color:#666666;font-weight:400;letter-spacing:0.000px;">10:10</div>
<div class="t" style="left:1637.82px;top:1292.47px;font-size:15.5px;line-height:15.5px;color:#666666;font-weight:400;letter-spacing:0.000px;">10:15</div>
<div class="t" style="left:1744.72px;top:1292.47px;font-size:15.5px;line-height:15.5px;color:#666666;font-weight:400;letter-spacing:0.000px;">10:20</div>
<div class="t" style="left:1852.62px;top:1292.47px;font-size:15.5px;line-height:15.5px;color:#666666;font-weight:400;letter-spacing:0.000px;">10:25</div>
<div class="t" style="left:1959.52px;top:1292.47px;font-size:15.5px;line-height:15.5px;color:#666666;font-weight:400;letter-spacing:0.000px;">10:30</div>
<div class="t" style="left:2049.13px;top:1292.47px;font-size:15.5px;line-height:15.5px;color:#666666;font-weight:400;letter-spacing:0.000px;">10:35</div>
<svg style="position:absolute;left:1170px;top:1339.8px" width="420" height="20" viewBox="1170 1339.8 420 20"><line x1="1178.8" y1="1349.8" x2="1201" y2="1349.8" stroke="#cccccc" stroke-width="3"/><line x1="1293" y1="1349.8" x2="1315.2" y2="1349.8" stroke="#2f6fe0" stroke-width="3"/><line x1="1544" y1="1349.8" x2="1566.2" y2="1349.8" stroke="#cccccc" stroke-width="3"/></svg>
<div class="t" style="left:1207.75px;top:1340.98px;font-size:17.5px;line-height:17.5px;color:#333333;font-weight:700;letter-spacing:0.000px;transform:scaleX(0.9531);transform-origin:0 0;">MySQL</div>
<div class="t" style="left:1322.00px;top:1340.98px;font-size:17.5px;line-height:17.5px;color:#333333;font-weight:700;letter-spacing:0.709px;">php-fpm-projectna_f3</div>
<div class="t" style="left:1572.60px;top:1340.98px;font-size:17.5px;line-height:17.5px;color:#333333;font-weight:700;letter-spacing:0.167px;">nginx</div>
<div style="position:absolute;left:2176.5px;top:1232.3px;width:88.5px;height:88.5px;border-radius:50%;background:#42c482"></div>
<svg style="position:absolute;left:2200px;top:1256px" width="42" height="42" viewBox="0 0 42 42"><path d="M21,8 L21,34 M8,21 L34,21" stroke="#fff" stroke-width="3.8" stroke-linecap="round"/></svg>
<svg style="position:absolute;left:0;top:0" width="2496" height="1484" viewBox="0 0 2496 1484"><path d="M387.6,714.6 L387.6,727.2 Q387.6,729.6 390,729.6 L404.6,729.6" fill="none" stroke="#b9bfc7" stroke-width="2.4" stroke-linecap="round"/><g stroke="#4a5568" stroke-width="2.3" stroke-linecap="round"><path d="M392.4,717.3 L399.6,717.3"/><path d="M392.4,720.9 L397,720.9"/><path d="M392.4,724.5 L401.8,724.5"/></g><circle cx="392.4" cy="801.3" r="4.03" fill="#4a5568"/><circle cx="392.40" cy="796.91" r="1.83" fill="#4a5568"/><circle cx="396.20" cy="799.10" r="1.83" fill="#4a5568"/><circle cx="396.20" cy="803.50" r="1.83" fill="#4a5568"/><circle cx="392.40" cy="805.69" r="1.83" fill="#4a5568"/><circle cx="388.60" cy="803.50" r="1.83" fill="#4a5568"/><circle cx="388.60" cy="799.10" r="1.83" fill="#4a5568"/><circle cx="392.4" cy="801.3" r="1.9" fill="#e2e8f0"/><circle cx="403.9" cy="807.9" r="4.09" fill="#4a5568"/><circle cx="403.90" cy="803.44" r="1.86" fill="#4a5568"/><circle cx="407.77" cy="805.67" r="1.86" fill="#4a5568"/><circle cx="407.77" cy="810.13" r="1.86" fill="#4a5568"/><circle cx="403.90" cy="812.36" r="1.86" fill="#4a5568"/><circle cx="400.03" cy="810.13" r="1.86" fill="#4a5568"/><circle cx="400.03" cy="805.67" r="1.86" fill="#4a5568"/><circle cx="403.9" cy="807.9" r="1.9" fill="#e2e8f0"/><g fill="none" stroke="#4a5568" stroke-width="1.6"><circle cx="396.1" cy="886.4" r="8.9"/><ellipse cx="396.1" cy="886.4" rx="4.2" ry="8.9"/><path d="M387.6,883.3 L404.6,883.3 M387.6,889.4 L404.6,889.4"/></g><g fill="none" stroke="#4a5568" stroke-width="1.7" stroke-linejoin="round"><path d="M396.1,959.6 L405.1,968.6 L396.1,977.6 L387.1,968.6 Z"/><path d="M393.7,972.2 L393.7,969.6 Q393.7,967.6 395.7,967.6 L399.6,967.6" stroke-linecap="round"/></g><path d="M397.9,965 L401.2,967.6 L397.9,970.2 Z" fill="#4a5568"/><g fill="none" stroke="#4a5568" stroke-width="2.3" stroke-linecap="round"><path d="M389.8,1045.3 A8.6,8.6 0 1,1 390.6,1057.2"/><path d="M396,1046.6 L396,1050.8 L399.2,1053.2"/></g><path d="M386.4,1042.4 L386.4,1048.2 L392.2,1048.2 Z" fill="#4a5568"/><path d="M393.50,1123.80 L395.34,1126.77 L398.73,1125.97 L397.93,1129.36 L400.90,1131.20 L397.93,1133.04 L398.73,1136.43 L395.34,1135.63 L393.50,1138.60 L391.66,1135.63 L388.27,1136.43 L389.07,1133.04 L386.10,1131.20 L389.07,1129.36 L388.27,1125.97 L391.66,1126.77 Z M394.90,1131.20 A1.4,1.4 0 1,0 392.10,1131.20 A1.4,1.4 0 1,0 394.90,1131.20 Z" fill="#4a5568" fill-rule="evenodd"/><path d="M405.00,1132.50 L406.34,1134.57 L408.75,1134.05 L408.23,1136.46 L410.30,1137.80 L408.23,1139.14 L408.75,1141.55 L406.34,1141.03 L405.00,1143.10 L403.66,1141.03 L401.25,1141.55 L401.77,1139.14 L399.70,1137.80 L401.77,1136.46 L401.25,1134.05 L403.66,1134.57 Z M406.30,1137.80 A1.3,1.3 0 1,0 403.70,1137.80 A1.3,1.3 0 1,0 406.30,1137.80 Z" fill="#4a5568" fill-rule="evenodd"/><g transform="translate(382,1202)"><path d="M23.2,4.6 C17.5,4.2 13.8,7 11.8,10.8 L9.4,15.6 Q9.3,17.6 11.2,17.8 L15.2,16 C20.2,13.5 23.6,10 23.2,4.6 Z" fill="none" stroke="#4a5568" stroke-width="1.8" stroke-linejoin="round"/><path d="M4.4,14.4 Q5.5,10.5 8,9.4 L12.4,9.1 L9.6,15.2 Z M13.3,23.3 Q12.9,19.5 13.7,17.6 L18.8,16.3 Q19.2,20 17.5,21 Z" fill="#4a5568"/><circle cx="18.3" cy="9.7" r="1.4" fill="#4a5568"/></g><g fill="#4a5568"><circle cx="391.8" cy="1291.3" r="3"/><circle cx="405.7" cy="1291.3" r="3"/><circle cx="398.6" cy="1296.5" r="3.5"/><path d="M386.2,1300.6 Q386.5,1295.5 391.8,1295.5 Q394.2,1295.5 395.3,1297 Q394,1298.8 394,1300.6 Z"/><path d="M410.6,1300.6 Q410.3,1295.5 405,1295.5 Q402.6,1295.5 401.5,1297 Q402.8,1298.8 402.8,1300.6 Z"/><path d="M391.4,1307.6 Q391.8,1301.2 398.6,1301.2 Q405.4,1301.2 405.8,1307.6 Z"/></g><path d="M396,1371.5 L403.9,1374.6 Q404.6,1375 404.5,1376 Q404,1385 396,1389.4 Q388,1385 387.5,1376 Q387.4,1375 388.1,1374.6 Z" fill="none" stroke="#4a5568" stroke-width="1.9" stroke-linejoin="round"/><path d="M396,1371.5 L388.1,1374.6 Q387.4,1375 387.5,1376 Q388,1385 396,1389.4 Z" fill="#4a5568"/></svg>
</div></body></html>
